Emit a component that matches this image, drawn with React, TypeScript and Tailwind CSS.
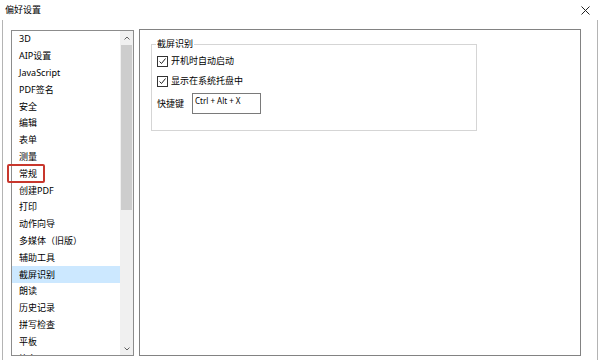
import { useState } from "react"

const items = [
  "3D",
  "AIP设置",
  "JavaScript",
  "PDF签名",
  "安全",
  "编辑",
  "表单",
  "测量",
  "常规",
  "创建PDF",
  "打印",
  "动作向导",
  "多媒体（旧版）",
  "辅助工具",
  "截屏识别",
  "朗读",
  "历史记录",
  "拼写检查",
  "平板",
  "签名",
]

export default function App() {
  const [selected, setSelected] = useState("截屏识别")
  const [autoStart, setAutoStart] = useState(true)
  const [showTray, setShowTray] = useState(true)

  return (
    <div className="w-[600px] h-[360px] bg-white overflow-hidden text-black font-['Noto_Sans','Noto_Sans_CJK_SC',sans-serif] text-[9px] leading-[12px]">
      {/* title bar */}
      <div className="h-[20px] flex items-center justify-between pl-[5px] pr-[10px]">
        <span>偏好设置</span>
        <svg width="9" height="9" viewBox="0 0 9 9" className="text-[#222]">
          <path d="M0.5 0.5 L8.5 8.5 M8.5 0.5 L0.5 8.5" stroke="currentColor" strokeWidth="1" />
        </svg>
      </div>

      <div className="ml-[2px] w-[596px] h-[340px] border-l border-r border-[#b4b4b4] flex pl-[8px] pt-[9px]">
        {/* category list */}
        <div className="relative mt-px w-[123px] h-[326px] border border-[#8c8c8c] flex">
          <ul className="w-[108px] h-full overflow-hidden">
            {items.map((name) => (
              <li
                key={name}
                onClick={() => setSelected(name)}
                className={`h-[16.8px] flex items-center pl-[7px] whitespace-nowrap ${
                  selected === name ? "bg-[#cce8ff]" : ""
                }`}
              >
                {name}
              </li>
            ))}
          </ul>
          {/* highlight around 常规 */}
          <span className="absolute left-[-5px] top-[133.4px] w-[38px] h-[19px] border-2 border-[#c8372d] rounded-[2px]" />
          <div className="w-[13px] h-full bg-[#f0f0f0] flex flex-col">
            <div className="h-[14px] flex items-center justify-center">
              <svg width="6" height="4" viewBox="0 0 6 4">
                <path d="M0.5 3.5 L3 1 L5.5 3.5" stroke="#606060" fill="none" strokeWidth="1" />
              </svg>
            </div>
            <div className="mx-px h-[165px] bg-[#cdcdcd]" />
            <div className="flex-1" />
            <div className="h-[13px] flex items-center justify-center">
              <svg width="6" height="4" viewBox="0 0 6 4">
                <path d="M0.5 0.5 L3 3 L5.5 0.5" stroke="#606060" fill="none" strokeWidth="1" />
              </svg>
            </div>
          </div>
        </div>

        {/* settings panel */}
        <div className="ml-[5px] w-[442px] h-[327px] border border-[#828282]">
          <fieldset className="ml-[11px] mt-[8px] w-[326px] h-[93px] border border-[#d5d5d5] pl-[5px]">
            <legend className="-ml-px px-px">截屏识别</legend>
            <label className="mt-px h-[20px] flex items-center gap-[3px]">
              <Checkbox checked={autoStart} onChange={() => setAutoStart(!autoStart)} />
              开机时自动启动
            </label>
            <label className="h-[20px] flex items-center gap-[3px]">
              <Checkbox checked={showTray} onChange={() => setShowTray(!showTray)} />
              显示在系统托盘中
            </label>
            <div className="mt-[2px] flex items-center">
              <span>快捷键</span>
              <div className="ml-[8px] w-[69px] h-[21px] border border-[#7a7a7a] pl-[2px] pt-[2px] text-[8px] leading-[10px]">
                Ctrl + Alt + X
              </div>
            </div>
          </fieldset>
        </div>
      </div>
    </div>
  )
}

function Checkbox({ checked, onChange }: { checked: boolean; onChange: () => void }) {
  return (
    <span
      onClick={onChange}
      className="w-[11px] h-[11px] border border-[#333] bg-white flex items-center justify-center"
    >
      {checked && (
        <svg width="9" height="9" viewBox="0 0 9 9">
          <path d="M1.5 4.5 L3.5 6.5 L7.5 1.5" stroke="#222" fill="none" strokeWidth="1" />
        </svg>
      )}
    </span>
  )
}
